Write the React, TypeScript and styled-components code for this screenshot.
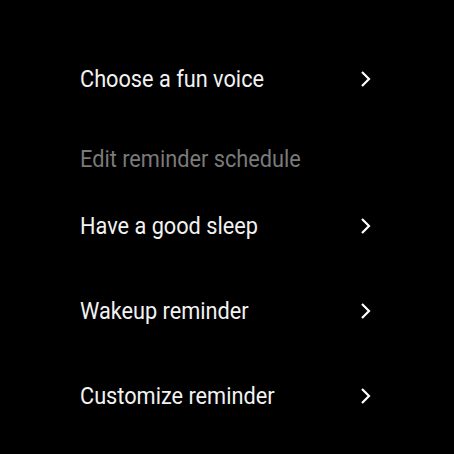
import React from "react";
import styled, { createGlobalStyle } from "styled-components";

const Global = createGlobalStyle`
  html, body { margin: 0; padding: 0; background: #000; }
  body { width: 454px; height: 454px; overflow: hidden; font-family: Roboto, "Noto Sans", sans-serif; }
`;

const Screen = styled.div`
  width: 454px;
  height: 454px;
  background: #000;
  display: flex;
  flex-direction: column;
  padding: 0 83px 0 80px;
  box-sizing: border-box;
`;

const Row = styled.div<{ $top: number }>`
  display: flex;
  align-items: center;
  justify-content: space-between;
  height: 28px;
  margin-top: ${(p) => p.$top}px;
`;

const Label = styled.span<{ $muted?: boolean }>`
  display: inline-block;
  font-size: 24px;
  line-height: 28px;
  color: ${(p) => (p.$muted ? "#7a7a7a" : "#f2f2f2")};
  white-space: nowrap;
  transform: scaleX(0.905);
  transform-origin: left center;
`;

const ChevronIcon = styled.svg`
  flex: none;
  width: 12px;
  height: 18px;
`;

const Chevron = () => (
  <ChevronIcon viewBox="0 0 12 18">
    <path d="M3 2 L10 9 L3 16" fill="none" stroke="#fff" strokeWidth="2.2" />
  </ChevronIcon>
);

export default function App() {
  return (
    <>
      <Global />
      <Screen>
        <Row $top={65}>
          <Label>Choose a fun voice</Label>
          <Chevron />
        </Row>
        <Row $top={52}>
          <Label $muted>Edit reminder schedule</Label>
        </Row>
        <Row $top={39}>
          <Label>Have a good sleep</Label>
          <Chevron />
        </Row>
        <Row $top={57}>
          <Label>Wakeup reminder</Label>
          <Chevron />
        </Row>
        <Row $top={57}>
          <Label>Customize reminder</Label>
          <Chevron />
        </Row>
      </Screen>
    </>
  );
}
